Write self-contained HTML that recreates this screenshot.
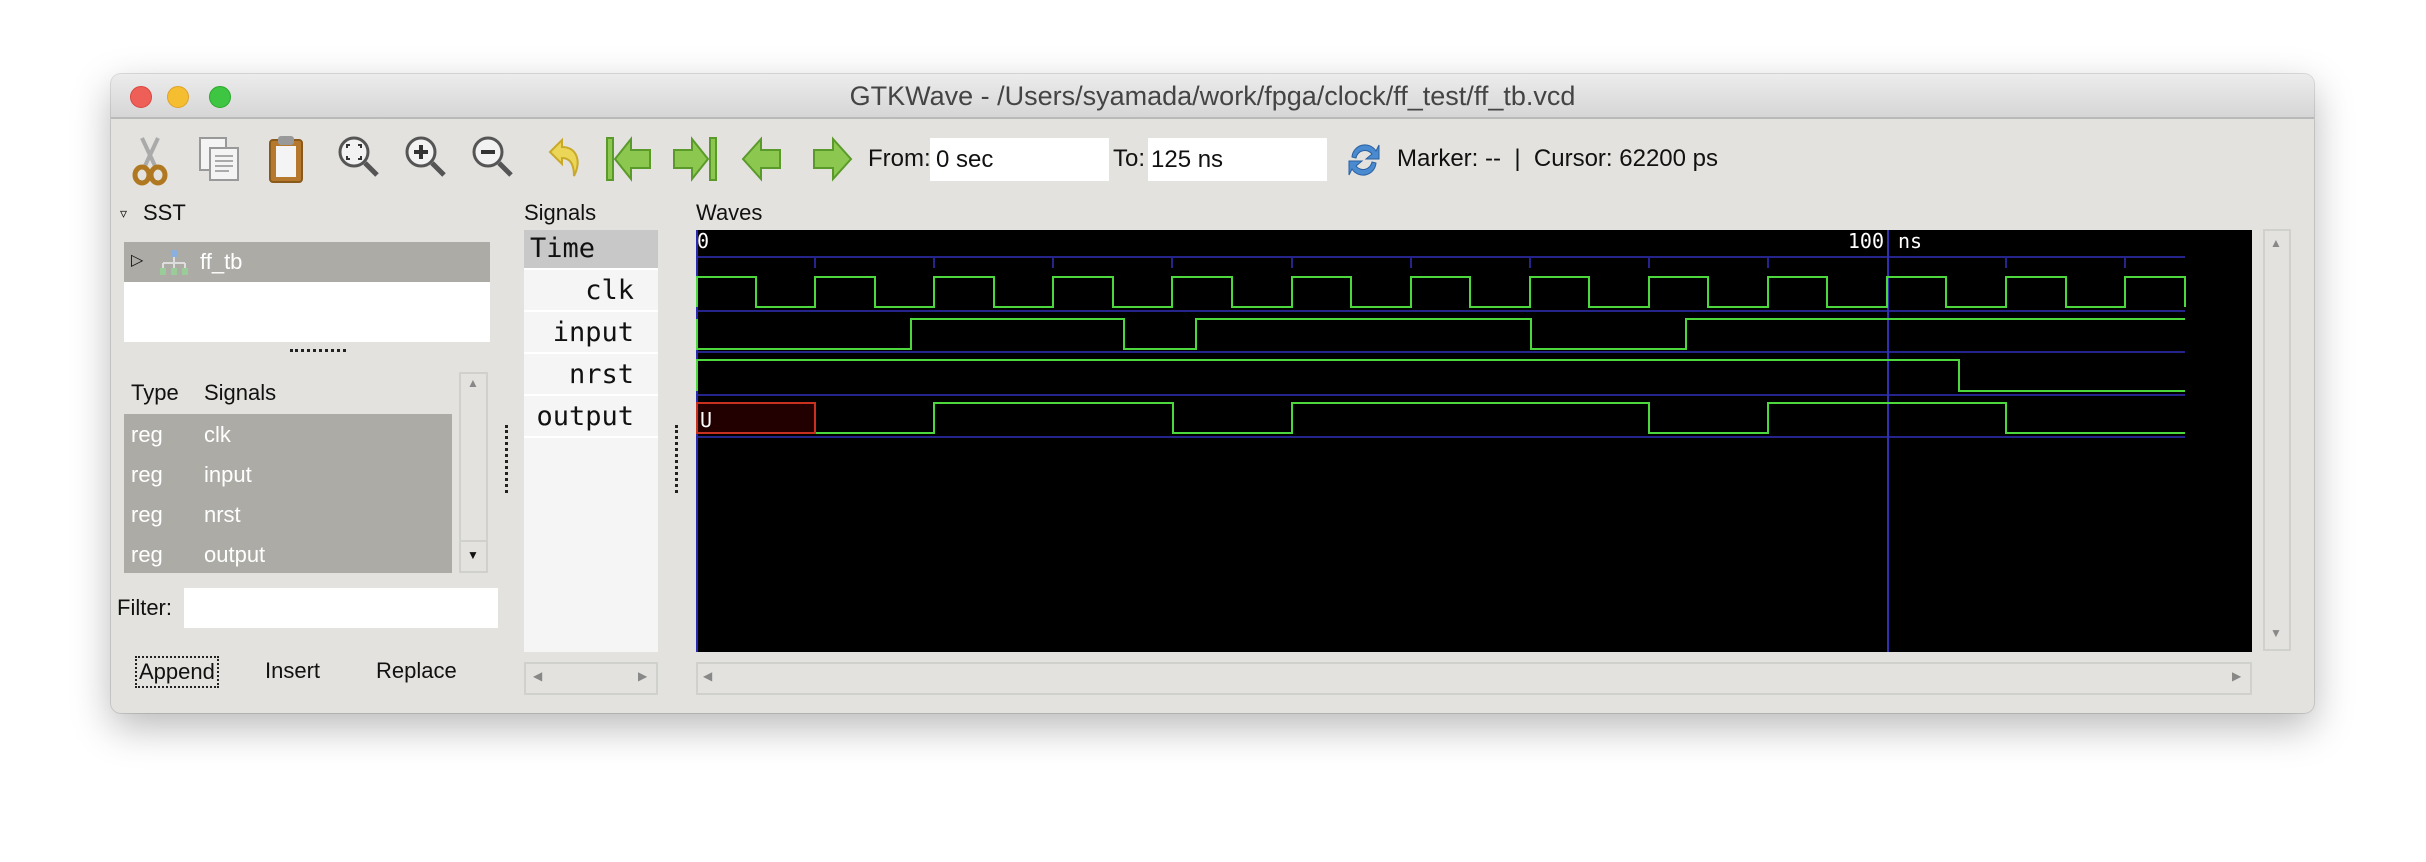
<!DOCTYPE html>
<html><head><meta charset="utf-8"><style>
*{margin:0;padding:0;box-sizing:border-box}
body{width:2426px;height:862px;background:#fff;position:relative;overflow:hidden;font-family:"Liberation Sans",sans-serif;color:#111}
.a{position:absolute}
.win{left:111px;top:74px;width:2203px;height:639px;background:#e3e2de;border-radius:10px;box-shadow:0 14px 40px rgba(0,0,0,.28),0 0 0 1px rgba(0,0,0,.12);overflow:hidden}
.tb{left:0;top:0;width:2203px;height:45px;background:linear-gradient(#ececec,#d6d6d6);border-bottom:2px solid #b9b9b9}
.dot{width:22px;height:22px;border-radius:50%;top:12px}
.t{font-size:22px;white-space:nowrap}
.tt{font-size:24px;white-space:nowrap}
.mono{font-family:"DejaVu Sans Mono","Liberation Mono",monospace}
.box{background:#fff}
.row{left:0;width:134px;height:40px;background:#f5f5f5;border-bottom:2px solid #fff}
.rn{position:absolute;right:24px;top:3px;font-size:27px}
</style></head><body>
<div class="a win">
 <div class="a tb"></div>
 <div class="a dot" style="left:19px;background:#ee5f57;border:1px solid #d8473f"></div>
 <div class="a dot" style="left:56px;background:#f5bd30;border:1px solid #dea12a"></div>
 <div class="a dot" style="left:98px;background:#3ec541;border:1px solid #2aa82c"></div>
 <div class="a" style="left:0;width:2203px;text-align:center;top:7px;color:#444;font-size:27px;white-space:nowrap">GTKWave - /Users/syamada/work/fpga/clock/ff_test/ff_tb.vcd</div>
</div>
<!-- toolbar icons -->
<svg class="a" style="left:120px;top:130px" width="760" height="60" viewBox="0 0 760 60">
 <g transform="translate(30,0)"><path d="M-8,8 L6,38 M8,8 L-6,38" stroke="#aaa" stroke-width="4" fill="none"/>
 <ellipse cx="-8" cy="45" rx="7" ry="8" fill="none" stroke="#b07820" stroke-width="5"/><ellipse cx="8" cy="45" rx="7" ry="8" fill="none" stroke="#b07820" stroke-width="5"/></g>
 <rect x="80" y="8" width="26" height="32" fill="#f4f4f4" stroke="#999" stroke-width="2"/>
 <rect x="90" y="18" width="28" height="32" fill="#f4f4f4" stroke="#999" stroke-width="2"/>
 <path d="M95,26h18M95,31h18M95,36h18M95,41h14" stroke="#aaa" stroke-width="2"/>
 <rect x="150" y="10" width="32" height="42" rx="3" fill="#b5782c" stroke="#8a5a1a" stroke-width="2"/>
 <rect x="156" y="16" width="20" height="31" fill="#f4f4f4"/>
 <rect x="158" y="6" width="16" height="9" rx="3" fill="#999"/>
 <g transform="translate(224,0)"><circle cx="10" cy="22" r="14" fill="#f2f2f2" stroke="#555" stroke-width="3"/><path d="M21,33l12,12" stroke="#555" stroke-width="5"/><path d="M3,18v-3h3M14,15h3v3M17,26v3h-3M6,29h-3v-3" stroke="#333" stroke-width="2" fill="none"/></g>
 <g transform="translate(291,0)"><circle cx="10" cy="22" r="14" fill="#f2f2f2" stroke="#555" stroke-width="3"/><path d="M21,33l12,12" stroke="#555" stroke-width="5"/><path d="M3,22h14M10,15v14" stroke="#333" stroke-width="4"/></g>
 <g transform="translate(358,0)"><circle cx="10" cy="22" r="14" fill="#f2f2f2" stroke="#555" stroke-width="3"/><path d="M21,33l12,12" stroke="#555" stroke-width="5"/><path d="M3,22h14" stroke="#333" stroke-width="4"/></g>
 <path d="M430,22 L442,10 L442,17 C456,17 462,30 454,46 C454,34 450,28 442,28 L442,34 Z" fill="#ecd657" stroke="#c9a92a" stroke-width="2"/>
 <rect x="487" y="8" width="6" height="42" fill="#8cc850" stroke="#5a9a2a" stroke-width="2"/>
 <path d="M495,29 L511,9 V20 H530 V38 H511 V49 Z" fill="#8cc850" stroke="#5a9a2a" stroke-width="2"/>
 <rect x="590" y="8" width="6" height="42" fill="#8cc850" stroke="#5a9a2a" stroke-width="2"/>
 <path d="M588,29 L572,9 V20 H554 V38 H572 V49 Z" fill="#8cc850" stroke="#5a9a2a" stroke-width="2"/>
 <path d="M623,29 L641,9 V20 H660 V38 H641 V49 Z" fill="#8cc850" stroke="#5a9a2a" stroke-width="2"/>
 <path d="M731,29 L713,9 V20 H694 V38 H713 V49 Z" fill="#8cc850" stroke="#5a9a2a" stroke-width="2"/>
</svg>
<div class="a tt" style="left:868px;top:145px">From:</div>
<div class="a box tt" style="left:930px;top:138px;width:179px;height:43px;padding:8px 6px">0 sec</div>
<div class="a tt" style="left:1113px;top:145px">To:</div>
<div class="a box tt" style="left:1148px;top:138px;width:179px;height:43px;padding:8px 3px">125 ns</div>
<svg class="a" style="left:1346px;top:139px" width="36" height="42"><path d="M6,18 A13,13 0 0 1 30,12 L33,6 V20 H20 L26,15 A9,9 0 0 0 10,19 Z" fill="#4a8ad0" stroke="#2a60a0"/><path d="M30,24 A13,13 0 0 1 6,30 L3,36 V22 H16 L10,27 A9,9 0 0 0 26,23 Z" fill="#4a8ad0" stroke="#2a60a0"/></svg>
<div class="a tt" style="left:1397px;top:145px">Marker: --&nbsp; |&nbsp; Cursor: 62200 ps</div>

<!-- left pane -->
<div class="a" style="left:120px;top:205px;font-size:14px">&#9663;</div>
<div class="a t" style="left:143px;top:200px">SST</div>
<div class="a box" style="left:124px;top:242px;width:366px;height:100px"></div>
<div class="a" style="left:124px;top:242px;width:366px;height:40px;background:#acaba6"></div>
<div class="a" style="left:131px;top:250px;font-size:16px;color:#111">&#9655;</div>
<svg class="a" style="left:158px;top:248px" width="34" height="30"><rect x="13" y="2" width="7" height="7" fill="#8ab0e0"/><path d="M16,9v6M5,15h22M5,15v5M16,15v5M27,15v5" stroke="#ddd" stroke-width="2"/><rect x="2" y="20" width="6" height="7" fill="#9c9"/><rect x="13" y="20" width="6" height="7" fill="#9c9"/><rect x="24" y="20" width="6" height="7" fill="#9c9"/></svg>
<div class="a t" style="left:200px;top:249px;color:#fff">ff_tb</div>
<div class="a" style="left:290px;top:349px;width:56px;border-top:3px dotted #222"></div>
<div class="a t" style="left:131px;top:380px">Type</div>
<div class="a t" style="left:204px;top:380px">Signals</div>
<div class="a" style="left:124px;top:414px;width:328px;height:159px;background:#acaba6"></div>
<div class="a t" style="left:131px;top:422px;color:#fff">reg</div><div class="a t" style="left:204px;top:422px;color:#fff">clk</div>
<div class="a t" style="left:131px;top:462px;color:#fff">reg</div><div class="a t" style="left:204px;top:462px;color:#fff">input</div>
<div class="a t" style="left:131px;top:502px;color:#fff">reg</div><div class="a t" style="left:204px;top:502px;color:#fff">nrst</div>
<div class="a t" style="left:131px;top:542px;color:#fff">reg</div><div class="a t" style="left:204px;top:542px;color:#fff">output</div>
<div class="a" style="left:459px;top:372px;width:29px;height:201px;border:2px solid #d0d0cc;background:#e3e2de"></div>
<div class="a" style="left:459px;top:540px;width:29px;height:2px;background:#d0d0cc"></div>
<div class="a" style="left:467px;top:376px;font-size:12px;color:#888">&#9650;</div>
<div class="a" style="left:467px;top:548px;font-size:12px;color:#111">&#9660;</div>
<div class="a t" style="left:117px;top:595px">Filter:</div>
<div class="a box" style="left:184px;top:588px;width:314px;height:40px"></div>
<div class="a t" style="left:135px;top:656px;border:2px dotted #222;padding:1px 2px">Append</div>
<div class="a t" style="left:265px;top:658px">Insert</div>
<div class="a t" style="left:376px;top:658px">Replace</div>
<div class="a" style="left:505px;top:425px;height:68px;border-left:3px dotted #222"></div>
<div class="a" style="left:675px;top:425px;height:68px;border-left:3px dotted #222"></div>

<!-- signals pane -->
<div class="a t" style="left:524px;top:200px">Signals</div>
<div class="a" style="left:524px;top:230px;width:134px;height:422px;background:#f5f5f5">
 <div class="a row" style="top:0;background:#c8c8c8"><span class="mono" style="position:absolute;left:6px;top:3px;font-size:27px">Time</span></div>
 <div class="a row" style="top:42px"><span class="rn mono">clk</span></div>
 <div class="a row" style="top:84px"><span class="rn mono">input</span></div>
 <div class="a row" style="top:126px"><span class="rn mono">nrst</span></div>
 <div class="a row" style="top:168px"><span class="rn mono">output</span></div>
</div>
<div class="a" style="left:524px;top:662px;width:134px;height:33px;border:2px solid #d0d0cc"></div>
<div class="a" style="left:533px;top:669px;font-size:12px;color:#888">&#9664;</div>
<div class="a" style="left:638px;top:669px;font-size:12px;color:#888">&#9654;</div>

<!-- waves -->
<div class="a t" style="left:696px;top:200px">Waves</div>
<svg class="a" style="left:696px;top:230px;background:#000" width="1556" height="422" viewBox="0 0 1556 422">
 <g stroke="#24248a" stroke-width="2" fill="none">
  <path d="M0,27H1489M0,81H1489M0,122H1489M0,165H1489M0,207H1489"/>
  <path d="M119,27v11M238,27v11M357,27v11M476,27v11M596,27v11M715,27v11M834,27v11M953,27v11M1072,27v11M1310,27v11M1429,27v11"/>
  <path d="M1,0V422" stroke="#2a2ab0"/>
  <path d="M1192,0V422" stroke="#3030b0"/>
 </g>
 <g stroke="#4cd83c" stroke-width="2" fill="none">
  <path d="M1,77V47H60V77H119V47H179V77H238V47H298V77H357V47H417V77H476V47H536V77H596V47H655V77H715V47H774V77H834V47H893V77H953V47H1012V77H1072V47H1131V77H1191V47H1250V77H1310V47H1370V77H1429V47H1489V77"/>
  <path d="M1,89V119H215V89H428V119H500V89H835V119H990V89H1489"/>
  <path d="M1,161V130H1263V161H1489"/>
  <path d="M119,203H238V173H477V203H596V173H953V203H1072V173H1310V203H1489"/>
 </g>
 <rect x="1" y="173" width="118" height="30" fill="#220000" stroke="#c83020" stroke-width="2"/>
 <g fill="#fff" font-family="DejaVu Sans Mono,Liberation Mono,monospace" font-size="20">
  <text x="1" y="18">0</text>
  <text x="1188" y="18" text-anchor="end">100</text>
  <text x="1202" y="18">ns</text>
  <text x="4" y="197">U</text>
 </g>
</svg>
<div class="a" style="left:2263px;top:229px;width:28px;height:422px;border:2px solid #d0d0cc"></div>
<div class="a" style="left:2270px;top:236px;font-size:12px;color:#888">&#9650;</div>
<div class="a" style="left:2270px;top:626px;font-size:12px;color:#888">&#9660;</div>
<div class="a" style="left:696px;top:662px;width:1556px;height:33px;border:2px solid #d0d0cc"></div>
<div class="a" style="left:703px;top:669px;font-size:12px;color:#888">&#9664;</div>
<div class="a" style="left:2232px;top:669px;font-size:12px;color:#888">&#9654;</div>
</body></html>
